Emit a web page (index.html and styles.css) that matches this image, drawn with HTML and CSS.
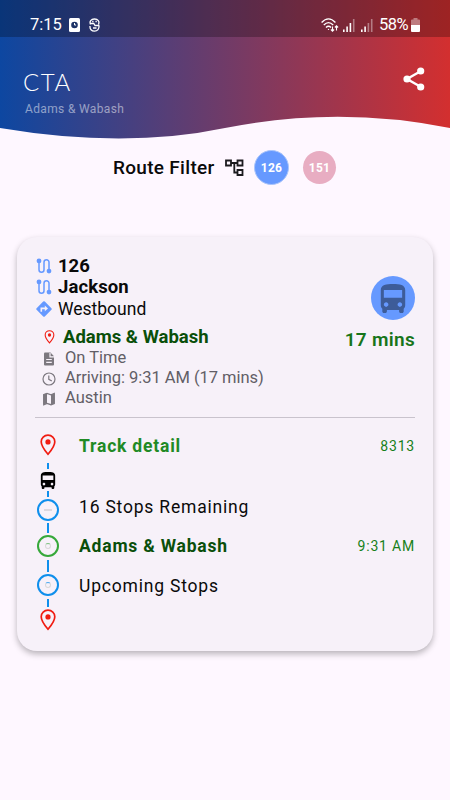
FILE: index.html
```html
<!DOCTYPE html>
<html lang="en">
<head>
    <meta charset="UTF-8">
    <meta name="viewport" content="width=device-width, initial-scale=1.0">
    <title>CTA</title>
    <link rel="stylesheet" href="styles.css">
</head>
<body>
    <!-- shared icons -->
    <svg class="defs" width="0" height="0">
        <symbol id="pin" viewBox="0 0 16 22">
            <path d="M8 1.200C4.200 1.200 1.200 4.100 1.200 7.800 1.200 12.400 8 20.300 8 20.300S14.800 12.400 14.800 7.800C14.800 4.100 11.800 1.200 8 1.200Z" fill="none" stroke="#f01c12" stroke-width="1.700"/>
            <circle cx="8" cy="7.900" r="2.600" fill="#f01c12"/>
        </symbol>
        <symbol id="bus" viewBox="4 2 16 19">
            <path d="M4 16c0 .88.39 1.670 1 2.220V20c0 .55.45 1 1 1h1c.55 0 1-.45 1-1v-1h8v1c0 .55.45 1 1 1h1c.55 0 1-.45 1-1v-1.780c.61-.55 1-1.340 1-2.220V6c0-3.500-3.580-4-8-4s-8 .5-8 4v10zm3.500 1c-.83 0-1.500-.67-1.500-1.500S6.670 14 7.500 14s1.500.67 1.500 1.500S8.330 17 7.500 17zm9 0c-.83 0-1.500-.67-1.500-1.500s.67-1.500 1.500-1.500 1.500.67 1.500 1.500-.67 1.500-1.500 1.500zm1.500-6H6V6h12v5z"/>
        </symbol>
        <symbol id="route" viewBox="0 0 16 16">
            <path d="M3 3v8.700a2.500 2.500 0 0 0 5 0v-7.400a2.500 2.500 0 0 1 5 0V13" fill="none" stroke="#6699ff" stroke-width="1.500"/>
            <circle cx="3" cy="2.900" r="2.400" fill="#6699ff"/>
            <circle cx="13" cy="13.100" r="2.400" fill="#6699ff"/>
        </symbol>
    </svg>

    <header class="header">
        <svg class="wave" width="450" height="140" viewBox="0 0 450 140">
            <defs>
                <linearGradient id="sky">
                    <stop offset="0" stop-color="#0d47a1"/>
                    <stop offset="1" stop-color="#d32f2f"/>
                </linearGradient>
            </defs>
            <path d="M0 0H450V128Q338 105.500 225 128Q125 149 0 128Z" fill="url(#sky)"/>
        </svg>
        <div class="status">
            <span class="time">7:15</span>
            <svg class="alarm" width="11" height="14" viewBox="0 0 11 14">
                <rect width="11" height="14" rx="1.500" fill="#fff"/>
                <circle cx="5.500" cy="7" r="3.300" fill="#1c3266"/>
                <path d="M5.500 5v2h1.600" fill="none" stroke="#fff"/>
            </svg>
            <svg class="mask" width="11" height="14" viewBox="0 0 11 14" fill="none" stroke="#fff" stroke-width="1.300">
                <path d="M1.500 6.500C.2 3.500 2 1 5.500 1S10.800 3.500 9.500 6.500M.8 5.500h4l1.200 2h4.400M1 8c-.3 3 1.500 5.200 4.500 5.200S10.300 11 10 7.500M4 10h3.500M3.200 3.500h1.300M6.500 3.500h1.300"/>
            </svg>
            <svg class="wifi" width="18" height="14" viewBox="0 0 18 14" fill="none" stroke="#fff" stroke-width="1.400">
                <path d="M.6 4.500q6.900-7.200 13.800 0M2.800 7q4.700-4.800 9.400 0M5 9.400q2.500-2.400 5 0"/>
                <circle cx="7.500" cy="11.400" r=".7" fill="#fff" stroke="none"/>
                <path d="M11.500 8.500v4.500M9.900 11.500l1.600 1.600 1.600-1.600M15.500 12.500V8M13.900 9.500l1.600-1.600 1.600 1.600" stroke-width="1.100"/>
            </svg>
            <svg class="signal" width="12" height="13" viewBox="0 0 12 13" fill="#fff">
                <path d="M0 10.500h1.600V13H0zM3.300 7.500h1.600V13H3.300zM6.600 4h1.600v9H6.600z"/>
                <path d="M9.900 0h1.600v13H9.900z" opacity=".4"/>
            </svg>
            <svg class="signal" width="12" height="13" viewBox="0 0 12 13" fill="#fff">
                <path d="M0 10.500h1.600V13H0zM3.300 7.500h1.600V13H3.300z"/>
                <path d="M6.600 4h1.600v9H6.600zM9.900 0h1.600v13H9.900z" opacity=".4"/>
            </svg>
            <span class="percent">58%</span>
            <svg class="battery" width="9" height="14" viewBox="0 0 9 14" fill="#fff">
                <path d="M0 7V2.500Q0 1.500 1 1.500h1.500V0h4v1.500H8Q9 1.500 9 2.500V7z" opacity=".4"/>
                <path d="M0 7h9v6q0 1-1 1H1q-1 0-1-1z"/>
            </svg>
        </div>
        <div class="title-bar">
            <div>
                <h1 class="title">CTA</h1>
                <p class="subtitle">Adams &amp; Wabash</p>
            </div>
            <svg class="share" width="22" height="24" viewBox="0 0 22 24">
                <path d="M18 4L4 12l14 8" fill="none" stroke="#fff" stroke-width="2.400"/>
                <g fill="#fff">
                    <circle cx="17.700" cy="4" r="3.600"/>
                    <circle cx="4" cy="12" r="3.600"/>
                    <circle cx="17.700" cy="20" r="3.600"/>
                </g>
            </svg>
        </div>
    </header>

    <section class="filter">
        <span class="filter-label">Route Filter</span>
        <svg width="19" height="18" viewBox="0 0 19 18" fill="none" stroke="#1c1b1f" stroke-width="1.800">
            <path d="M1 1.500h5v5H1zM12.500 1.500h5v5h-5zM12.500 11h5v5h-5zM6 4h6.500M9.300 4v9.500h3.200"/>
        </svg>
        <span class="chip chip-on">126</span>
        <span class="chip chip-off">151</span>
    </section>

    <main class="card">
        <section class="summary">
            <div class="info">
                <div class="line"><svg width="16" height="16"><use href="#route"/></svg><b>126</b></div>
                <div class="line"><svg width="16" height="16"><use href="#route"/></svg><b class="dest">Jackson</b></div>
                <div class="line">
                    <svg width="16" height="16" viewBox="0 0 16 16">
                        <path d="M7.200.6q.8-.8 1.600 0l6.600 6.600q.8.8 0 1.600l-6.600 6.600q-.8.8-1.600 0L.6 8.800q-.8-.8 0-1.600z" fill="#6699ff"/>
                        <path d="M5.300 10.800V7.400H9.500" fill="none" stroke="#f7f1f9" stroke-width="1.600"/>
                        <path d="M8.800 4.500L12 7.400 8.800 10.300z" fill="#f7f1f9"/>
                    </svg>
                    <span class="direction">Westbound</span>
                </div>
                <div class="line stop">
                    <svg width="11" height="14"><use href="#pin"/></svg>
                    <b>Adams &amp; Wabash</b>
                </div>
                <div class="detail">
                    <svg width="14" height="14" viewBox="0 0 14 14">
                        <path d="M2 1.500Q2 .5 3 .5h5.500L12 4.200v8.300q0 1-1 1H3q-1 0-1-1z" fill="#7c787f"/>
                        <path d="M8 1v3.800h4M4.200 7.500h5.600M4.200 10.300h5.600" fill="none" stroke="#f7f1f9" stroke-width="1.200"/>
                    </svg>
                    <span>On Time</span>
                </div>
                <div class="detail">
                    <svg width="14" height="14" viewBox="0 0 14 14" fill="none" stroke="#7c787f" stroke-width="1.200">
                        <circle cx="7" cy="7" r="6"/>
                        <path d="M6.800 3.500v3.800l3 1.800"/>
                    </svg>
                    <span class="arriving">Arriving: 9:31 AM (17 mins)</span>
                </div>
                <div class="detail">
                    <svg width="14" height="14" viewBox="0 0 14 14">
                        <path d="M1.800 2.500L5 1.500l4 1.300 3.200-1.300v10L9 12.700 5 11.400l-3.200 1.300z" fill="none" stroke="#7c787f" stroke-width="1.300"/>
                        <path d="M1.200 2.500l3.800-1.200v10L1.200 12.700zM9 2.800l3.800-1.500v10.200L9 12.800z" fill="#7c787f"/>
                    </svg>
                    <span>Austin</span>
                </div>
            </div>
            <div class="eta">
                <span class="badge"><svg width="28" height="29" fill="#3d5c99"><use href="#bus"/></svg></span>
                <span class="mins">17 mins</span>
            </div>
        </section>

        <section class="track">
            <div class="rail">
                <svg width="16" height="22"><use href="#pin"/></svg>
                <i class="dash dash-first"></i>
                <svg width="16" height="17"><use href="#bus"/></svg>
                <i class="dash dash-short"></i>
                <span class="node"><i class="minus"></i></span>
                <i class="dash dash-mid"></i>
                <span class="node node-green"><i class="spinner"></i></span>
                <i class="dash dash-long"></i>
                <span class="node"><i class="spinner spinner-blue"></i></span>
                <i class="dash dash-last"></i>
                <svg width="16" height="22"><use href="#pin"/></svg>
            </div>
            <div class="steps">
                <div class="step step-head"><b>Track detail</b><span class="side">8313</span></div>
                <div class="step step-remaining"><span>16 Stops Remaining</span></div>
                <div class="step step-here"><b>Adams &amp; Wabash</b><span class="side">9:31 AM</span></div>
                <div class="step step-upcoming"><span>Upcoming Stops</span></div>
            </div>
        </section>
    </main>
</body>
</html>
```
FILE: styles.css
```css
* {
    box-sizing: border-box;
}
body {
    margin: 0;
    width: 450px;
    height: 800px;
    overflow: hidden;
    background-color: #fef7ff;
    color: #0a0a0a;
    font-family: Roboto, sans-serif;
}
svg {
    display: block;
    flex: none;
}
.defs {
    position: absolute;
}

/* header */
.header {
    position: relative;
    height: 140px;
    color: #fff;
}
.wave {
    position: absolute;
    top: 0;
    left: 0;
}
.status {
    position: relative;
    display: flex;
    align-items: center;
    height: 37px;
    padding: 13px 30px 0;
    background-color: rgba(0, 0, 0, 0.25);
    font-size: 16.500px;
    line-height: 24px;
}
.time {
    width: 31px;
    white-space: nowrap;
}
.alarm {
    margin-left: 8px;
}
.mask {
    margin-left: 9px;
}
.wifi {
    margin-left: auto;
}
.signal {
    margin-left: 4px;
}
.signal + .signal {
    margin-left: 6px;
}
.percent {
    margin-left: 6px;
    width: 31px;
    letter-spacing: -0.500px;
}
.battery {
    margin-left: 1px;
}
.title-bar {
    position: relative;
    display: flex;
    justify-content: space-between;
    padding: 30px 25px 0 23px;
}
.title {
    margin: -1px 0 0;
    font-family: Lato, sans-serif;
    font-size: 24px;
    font-weight: 300;
    line-height: 32px;
    letter-spacing: 1.500px;
}
.subtitle {
    margin: 3px 0 0 2px;
    color: rgba(255, 255, 255, 0.5);
    font-size: 12px;
    line-height: 16px;
    letter-spacing: 0.350px;
}

/* route filter */
.filter {
    display: flex;
    align-items: center;
    height: 55px;
    padding-left: 113px;
}
.filter-label {
    width: 102px;
    margin-right: 10px;
    font-size: 19px;
    font-weight: 500;
    letter-spacing: 0.300px;
    white-space: nowrap;
}
.chip {
    display: flex;
    align-items: center;
    justify-content: center;
    width: 33px;
    height: 33px;
    border-radius: 50%;
    color: #fff;
    font-size: 12px;
    font-weight: 700;
    letter-spacing: 0.300px;
}
.chip-on {
    width: 35px;
    height: 35px;
    margin: 0 14px 0 10px;
    border: 1px solid #a9c4fb;
    background-color: #6699ff;
}
.chip-off {
    background-color: #e8adc2;
}

/* card */
.card {
    width: 416px;
    height: 414px;
    margin: 42px 0 0 17px;
    padding: 18px 18px 0;
    border-radius: 20px;
    background-color: #f7f1f9;
    box-shadow: 0 3px 6px rgba(0, 0, 0, 0.28);
}
.summary {
    display: flex;
    justify-content: space-between;
    height: 163px;
    border-bottom: 1px solid #c9c3cd;
}
.line {
    display: flex;
    align-items: center;
    gap: 6px;
    height: 21.500px;
    padding-left: 1px;
    font-size: 18.500px;
}
.dest {
    letter-spacing: 0.100px;
}
.direction {
    font-size: 17.500px;
}
.stop {
    gap: 8px;
    height: 28px;
    padding: 7px 0 0 9px;
    color: #0a4f0a;
    font-size: 18.500px;
}
.detail {
    display: flex;
    align-items: center;
    gap: 9px;
    height: 20px;
    padding-left: 7px;
    color: #625e66;
    font-size: 16.500px;
}
.detail svg {
    margin-top: 2px;
}
.arriving {
    letter-spacing: -0.040px;
}
.eta {
    display: flex;
    flex-direction: column;
    align-items: flex-end;
    padding-top: 21px;
}
.badge {
    display: flex;
    align-items: center;
    justify-content: center;
    width: 44px;
    height: 44px;
    border-radius: 50%;
    background-color: #6699ff;
}
.mins {
    margin-top: 8px;
    color: #17751a;
    font-size: 19px;
    font-weight: 600;
    line-height: 24px;
    letter-spacing: 0.300px;
}

/* track detail */
.track {
    display: flex;
    gap: 18px;
    padding-top: 16px;
}
.rail {
    display: flex;
    flex-direction: column;
    align-items: center;
    width: 26px;
}
.dash {
    width: 2px;
    background-color: #0f8fec;
}
.dash-first {
    height: 6px;
    margin: 7px 0 3px;
}
.dash-short {
    height: 6px;
    margin: 2px 0;
}
.dash-mid {
    height: 10px;
    margin: 2px 0;
}
.dash-long {
    height: 12px;
    margin: 3px 0 2px;
}
.dash-last {
    height: 8px;
    margin: 3px 0 2px;
}
.node {
    display: flex;
    align-items: center;
    justify-content: center;
    width: 22px;
    height: 22px;
    border: 2px solid #0f8fec;
    border-radius: 50%;
}
.node-green {
    border-color: #36a83a;
}
.minus {
    width: 8px;
    height: 2px;
    background-color: #ddd8df;
}
.spinner {
    width: 6px;
    height: 6px;
    border: 1px solid #d8d8d8;
    border-top-color: #7dc280;
    border-radius: 50%;
}
.spinner-blue {
    border-top-color: #4aa9ef;
}
.steps {
    flex: 1;
}
.step {
    display: flex;
    align-items: center;
    justify-content: space-between;
    height: 24px;
    font-size: 17.500px;
    letter-spacing: 0.800px;
}
.step-head {
    color: #218a25;
}
.step-remaining {
    margin-top: 37px;
}
.step-here {
    margin-top: 15px;
    color: #0a4f0a;
}
.step-upcoming {
    margin-top: 16px;
}
.side {
    color: #17801a;
    font-size: 14px;
}
```
